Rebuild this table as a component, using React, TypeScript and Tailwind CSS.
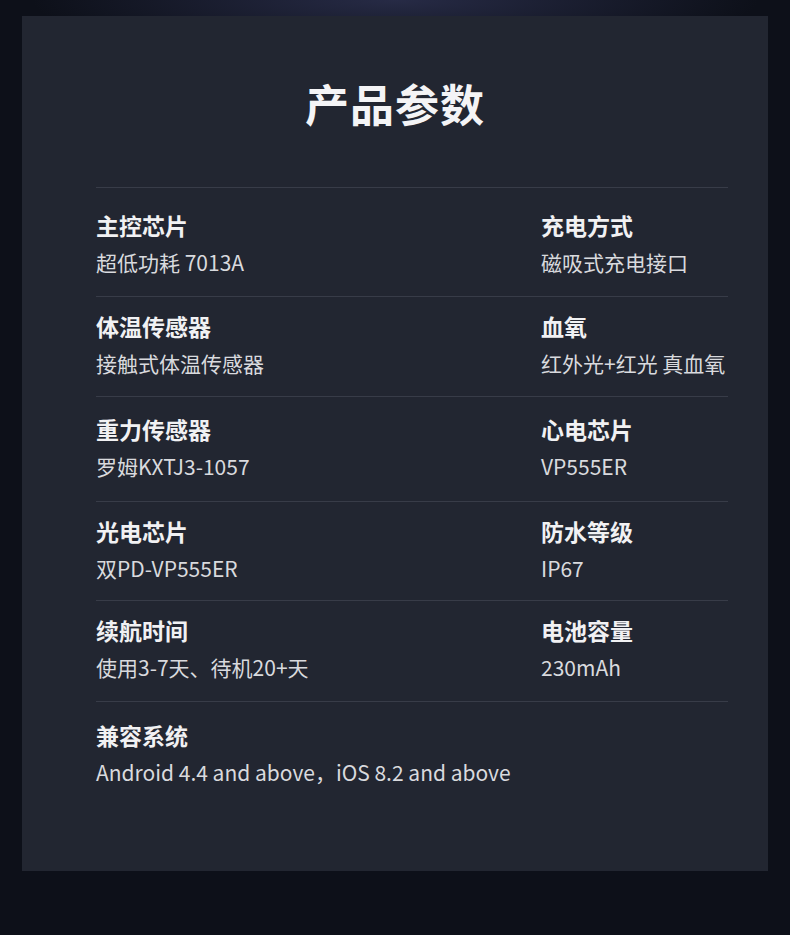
const rows: { a: string; b: string; c: string; d: string; pt: string; pb: string }[] = [
  { a: "主控芯片", b: "超低功耗 7013A", c: "充电方式", d: "磁吸式充电接口", pt: "pt-[22px]", pb: "pb-[20px]" },
  { a: "体温传感器", b: "接触式体温传感器", c: "血氧", d: "红外光+红光 真血氧", pt: "pt-[14px]", pb: "pb-[19px]" },
  { a: "重力传感器", b: "罗姆KXTJ3-1057", c: "心电芯片", d: "VP555ER", pt: "pt-[17px]", pb: "pb-[21px]" },
  { a: "光电芯片", b: "双PD-VP555ER", c: "防水等级", d: "IP67", pt: "pt-[14px]", pb: "pb-[18px]" },
  { a: "续航时间", b: "使用3-7天、待机20+天", c: "电池容量", d: "230mAh", pt: "pt-[14px]", pb: "pb-[20px]" },
];

function Spec({ label, value }: { label: string; value: string }) {
  return (
    <div className="flex flex-col">
      <div className="text-[23px] font-bold leading-[30px] text-[#f1f1f3]">{label}</div>
      <div className="mt-[8px] whitespace-nowrap text-[21px] leading-[28px] text-[#d9dade]">{value}</div>
    </div>
  );
}

export default function App() {
  return (
    <div
      className="relative min-h-[935px] w-full bg-[#0d1019] pt-4"
      style={{ fontFamily: '"Noto Sans CJK SC", "Noto Sans", sans-serif' }}
    >
      <div className="pointer-events-none absolute inset-x-0 top-0 h-[60px] bg-[radial-gradient(ellipse_at_top,rgba(40,44,72,0.95),rgba(13,16,25,0)_65%)]" />
      <section className="relative mx-[22px] h-[855px] bg-[#222631]">
        <h1 className="pt-[59px] text-center text-[44px] font-bold leading-[56px] tracking-[1px] text-[#f4f4f6]">
          产品参数
        </h1>
        <div className="mt-[56px] pl-[74px] pr-[40px]">
          {rows.map((r, i) => (
            <div key={i} className={`grid grid-cols-[445px_1fr] border-t border-[#383c48] ${r.pt} ${r.pb}`}>
              <Spec label={r.a} value={r.b} />
              <Spec label={r.c} value={r.d} />
            </div>
          ))}
          <div className="border-t border-[#383c48] pt-[18px]">
            <Spec label="兼容系统" value="Android 4.4 and above，iOS 8.2 and above" />
          </div>
        </div>
      </section>
    </div>
  );
}
